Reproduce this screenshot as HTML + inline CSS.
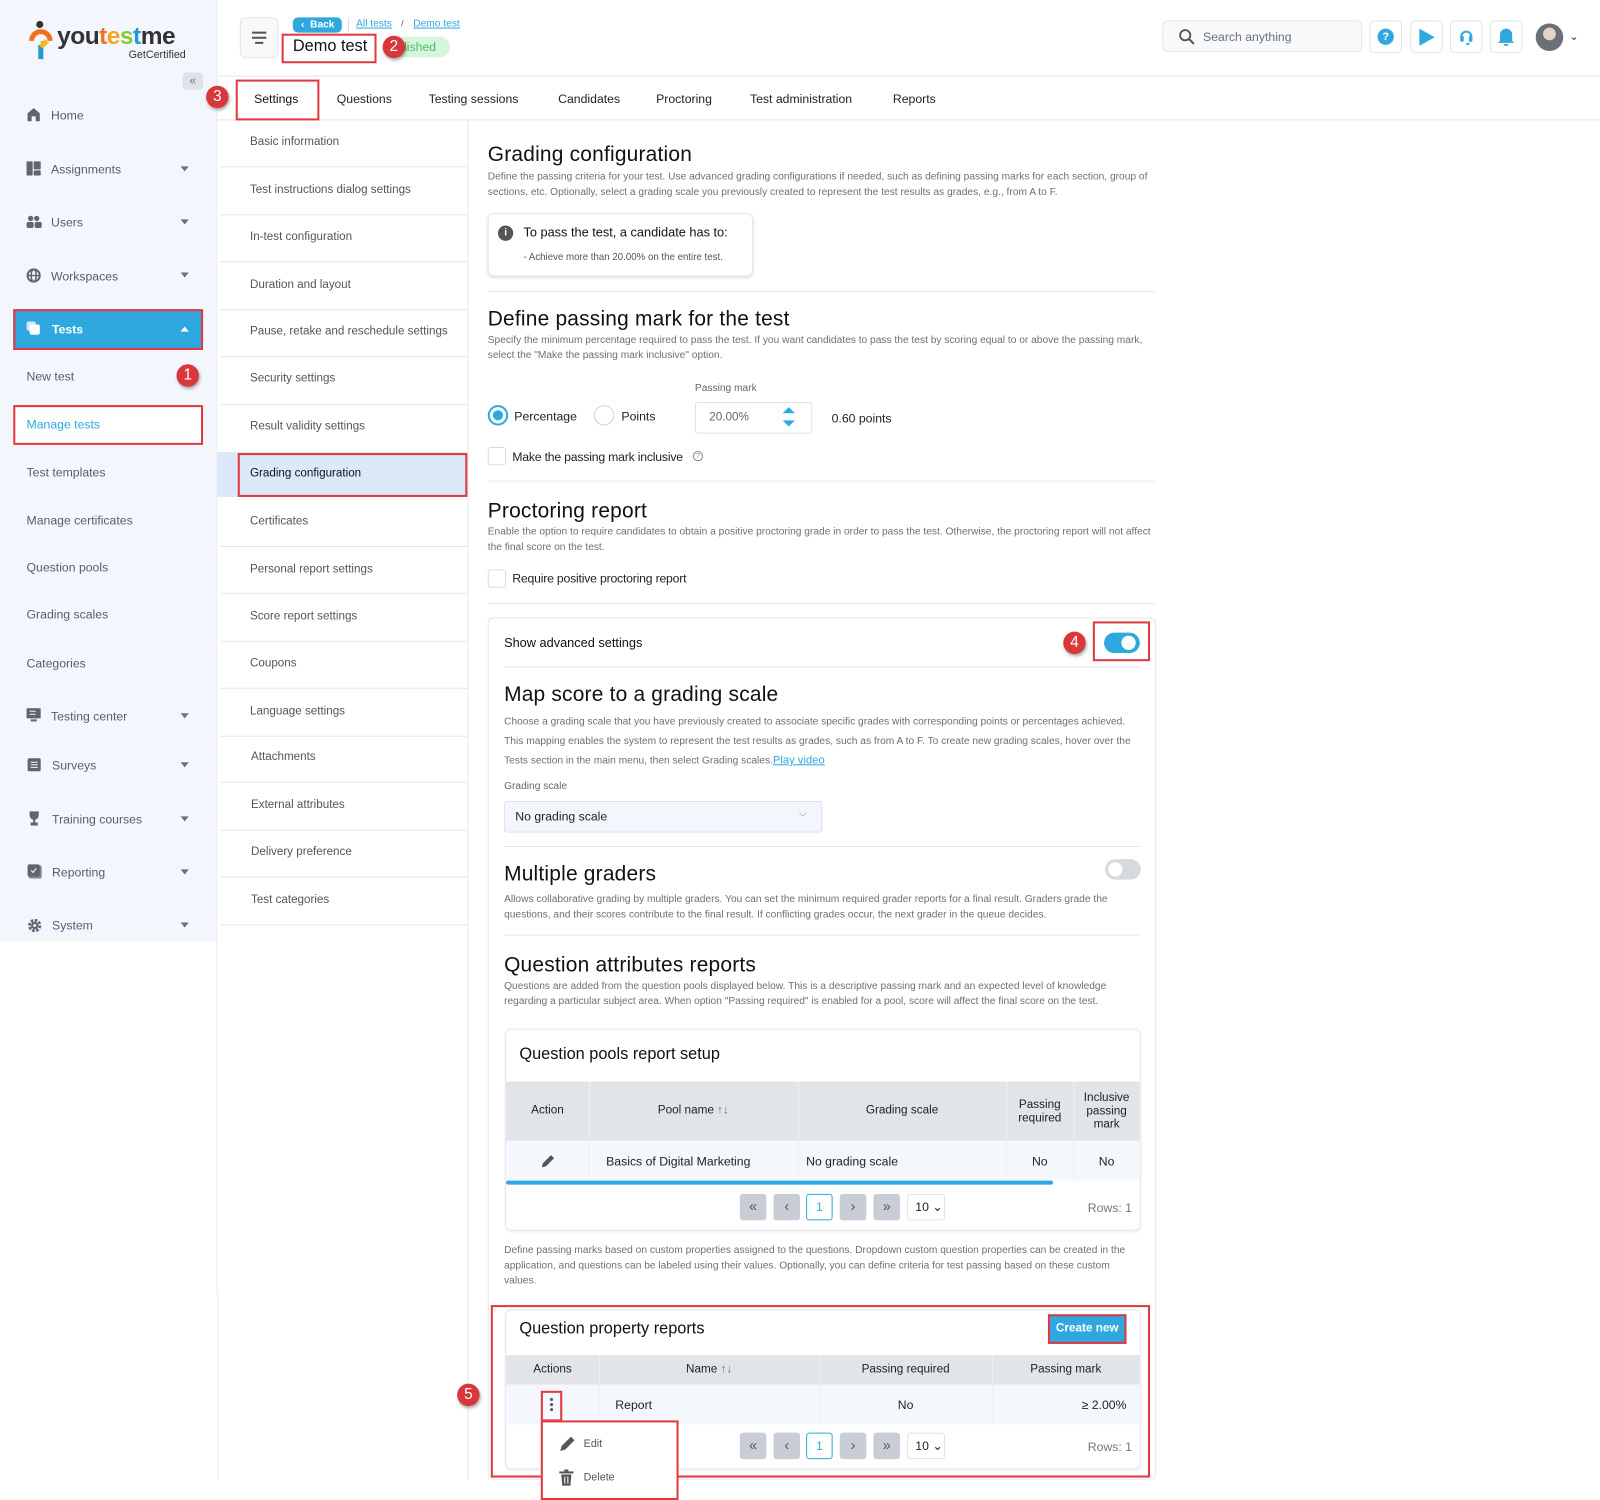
<!DOCTYPE html>
<html><head><meta charset="utf-8"><style>
*{box-sizing:border-box;margin:0;padding:0}
html,body{width:1600px;height:1500px;overflow:hidden;background:#fff}
body{font-family:"Liberation Sans",Arial,sans-serif;color:#222}
#w{position:absolute;left:0;top:0;width:1568px;height:1470px;transform:scale(1.0204);transform-origin:0 0}
.a{position:absolute;white-space:nowrap}
.nav{font-size:12px;color:#555e6b}
.sm{font-size:11.4px;color:#50565f}
.d{font-size:10px;color:#6b7079;line-height:15px;white-space:normal}
.h{font-size:20.5px;color:#111;letter-spacing:.2px}
.hr{position:absolute;height:1px;background:#e3e7ec}
.badge{position:absolute;width:22px;height:22px;border-radius:50%;background:#d8373c;color:#fff;font-size:15px;text-align:center;line-height:22px;box-shadow:1px 2px 3px rgba(0,0,0,.35)}
.red{position:absolute;border:2px solid #e0393e}
.car{position:absolute;width:0;height:0;border-left:4px solid transparent;border-right:4px solid transparent;border-top:5px solid #6b717a}
.pb{position:absolute;width:26px;height:26px;border-radius:3px;background:#c9ced6;color:#555;font-size:14px;text-align:center;line-height:25px}
.th{font-size:11.5px;color:#222;text-align:center}
</style></head><body><div id="w">

<!-- sidebar -->
<div class="a" style="left:0;top:0;width:212px;height:922px;background:#f3f7fd"></div>
<svg class="a" style="left:28px;top:20px" width="24" height="40" viewBox="0 0 24 40"><circle cx="11" cy="4" r="3.5" fill="#333"/><path d="M3 20 a9 9 0 0 1 18 0" stroke="#f37021" stroke-width="5" fill="none"/><path d="M12 20 l6 0 l-6 10z" fill="#8cc63f"/><path d="M12 24 l0 14" stroke="#1e9ad6" stroke-width="5"/><path d="M18 20 l-6 6" stroke="#f8b61b" stroke-width="5"/></svg>
<div class="a" style="left:56px;top:22px;font-size:24px;font-weight:bold;color:#333;letter-spacing:-.5px">you<span style="color:#f37021">t</span><span style="color:#f8a51b">e</span><span style="color:#8cc63f">s</span><span style="color:#1e9ad6">t</span>me</div>
<div class="a" style="left:126px;top:48px;font-size:10.5px;color:#333">GetCertified</div>
<div class="a" style="left:179px;top:71px;width:20px;height:17px;border-radius:4px;background:#dde2e8;color:#777;font-size:12px;text-align:center;line-height:16px">«</div>

<svg class="a" style="left:26px;top:105px" width="14" height="14" viewBox="0 0 14 14"><path d="M1 14V6L7 1l6 5v8H9V9H5v5z" fill="#5d6570"/></svg>
<div class="a nav" style="left:50px;top:106px">Home</div>
<svg class="a" style="left:26px;top:158px" width="14" height="14"><rect x="0" y="0" width="6" height="14" rx="1" fill="#5d6570"/><rect x="7" y="0" width="7" height="8" rx="1" fill="#5d6570"/><rect x="7" y="9" width="7" height="5" rx="1" fill="#5d6570"/></svg>
<div class="a nav" style="left:50px;top:159px">Assignments</div><div class="car" style="left:177px;top:163px"></div>
<svg class="a" style="left:26px;top:211px" width="15" height="13"><circle cx="4" cy="3" r="2.6" fill="#5d6570"/><circle cx="10" cy="3" r="2.6" fill="#5d6570"/><rect x="0" y="6.5" width="7" height="6" rx="2" fill="#5d6570"/><rect x="8" y="6.5" width="7" height="6" rx="2" fill="#5d6570"/></svg>
<div class="a nav" style="left:50px;top:211px">Users</div><div class="car" style="left:177px;top:215px"></div>
<svg class="a" style="left:26px;top:263px" width="14" height="14"><circle cx="7" cy="7" r="6" fill="none" stroke="#5d6570" stroke-width="2"/><ellipse cx="7" cy="7" rx="2.5" ry="6" fill="none" stroke="#5d6570" stroke-width="1.5"/><path d="M1 7h12" stroke="#5d6570" stroke-width="1.5"/></svg>
<div class="a nav" style="left:50px;top:264px">Workspaces</div><div class="car" style="left:177px;top:267px"></div>

<div class="a" style="left:13px;top:303px;width:186px;height:40px;background:#2ea8df"></div>
<div class="red" style="left:13px;top:303px;width:186px;height:40px"></div>
<svg class="a" style="left:26px;top:315px" width="14" height="14"><rect x="0" y="0" width="9" height="9" rx="2" fill="#cdeaf8"/><rect x="3" y="3" width="10" height="10" rx="2" fill="#fff"/></svg>
<div class="a" style="left:51px;top:316px;font-size:12px;font-weight:bold;color:#fff">Tests</div>
<div class="a" style="left:177px;top:320px;width:0;height:0;border-left:4px solid transparent;border-right:4px solid transparent;border-bottom:5px solid #fff"></div>

<div class="a nav" style="left:26px;top:362px">New test</div>
<div class="badge" style="left:173px;top:357px">1</div>
<div class="a" style="left:13px;top:397px;width:186px;height:39px;background:#fff"></div>
<div class="red" style="left:13px;top:397px;width:186px;height:39px"></div>
<div class="a" style="left:26px;top:409px;font-size:12px;color:#2ea8df">Manage tests</div>
<div class="a nav" style="left:26px;top:456px">Test templates</div>
<div class="a nav" style="left:26px;top:503px">Manage certificates</div>
<div class="a nav" style="left:26px;top:549px">Question pools</div>
<div class="a nav" style="left:26px;top:595px">Grading scales</div>
<div class="a nav" style="left:26px;top:643px">Categories</div>
<svg class="a" style="left:26px;top:694px" width="14" height="14"><rect x="0" y="0" width="14" height="10" rx="1" fill="#5d6570"/><rect x="4" y="11" width="6" height="2" fill="#5d6570"/><path d="M3 3h6M3 6h6" stroke="#f3f7fd"/></svg>
<div class="a nav" style="left:50px;top:695px">Testing center</div><div class="car" style="left:177px;top:699px"></div>
<svg class="a" style="left:27px;top:743px" width="13" height="13"><rect width="13" height="13" rx="2" fill="#5d6570"/><path d="M3 4h7M3 6.5h7M3 9h7" stroke="#f3f7fd"/></svg>
<div class="a nav" style="left:51px;top:743px">Surveys</div><div class="car" style="left:177px;top:747px"></div>
<svg class="a" style="left:27px;top:795px" width="13" height="14"><path d="M2 0h9v4a4.5 4.5 0 0 1-9 0z" fill="#5d6570"/><rect x="5.5" y="8" width="2" height="3" fill="#5d6570"/><rect x="3" y="11" width="7" height="3" fill="#5d6570"/></svg>
<div class="a nav" style="left:51px;top:796px">Training courses</div><div class="car" style="left:177px;top:800px"></div>
<svg class="a" style="left:27px;top:847px" width="14" height="14"><rect x="1" y="1" width="13" height="13" rx="2" fill="#888"/><rect width="12" height="12" rx="2" fill="#5d6570"/><path d="M3.5 6l2 2 3-4" stroke="#fff" fill="none"/></svg>
<div class="a nav" style="left:51px;top:848px">Reporting</div><div class="car" style="left:177px;top:852px"></div>
<svg class="a" style="left:27px;top:900px" width="14" height="14" viewBox="0 0 14 14"><circle cx="7" cy="7" r="5" fill="none" stroke="#5d6570" stroke-width="3" stroke-dasharray="2.5 1.4"/><circle cx="7" cy="7" r="3.5" fill="#5d6570"/><circle cx="7" cy="7" r="1.5" fill="#f3f7fd"/></svg>
<div class="a nav" style="left:51px;top:900px">System</div><div class="car" style="left:177px;top:904px"></div>

<!-- header -->
<div class="a" style="left:235px;top:17px;width:38px;height:40px;border:1px solid #e1e5ea;border-radius:6px;background:#f8f9fb"></div>
<div class="a" style="left:247px;top:31px;width:14px;height:1.5px;background:#555"></div>
<div class="a" style="left:247px;top:36px;width:14px;height:1.5px;background:#555"></div>
<div class="a" style="left:250px;top:41px;width:8px;height:1.5px;background:#555"></div>
<div class="a" style="left:287px;top:17px;width:48px;height:15px;border-radius:5px;background:#2ea8df;color:#fff;font-size:10px;font-weight:bold;line-height:15px;padding-left:8px">‹&nbsp; Back</div>
<div class="a" style="left:341px;top:17px;width:1px;height:15px;background:#ddd"></div>
<div class="a" style="left:349px;top:18px;font-size:10px;color:#2ea8df;text-decoration:underline">All tests</div>
<div class="a" style="left:393px;top:18px;font-size:9px;color:#555">/</div>
<div class="a" style="left:405px;top:18px;font-size:10px;color:#2ea8df;text-decoration:underline">Demo test</div>
<div class="a" style="left:376px;top:36px;width:65px;height:20px;border-radius:10px;background:#d5f5dc;color:#47c062;font-size:12px;line-height:20px;padding-left:20px">lished</div>
<div class="a" style="left:287px;top:37px;font-size:16px;color:#111">Demo test</div>
<div class="red" style="left:276px;top:33px;width:93px;height:29px"></div>
<div class="badge" style="left:375px;top:35px">2</div>

<div class="a" style="left:1139px;top:20px;width:196px;height:31px;border:1px solid #e4e7eb;border-radius:5px;background:#f8f9fb"></div>
<svg class="a" style="left:1155px;top:28px" width="16" height="16"><circle cx="6.5" cy="6.5" r="5" fill="none" stroke="#555" stroke-width="1.8"/><path d="M10 10l5 5" stroke="#555" stroke-width="2"/></svg>
<div class="a" style="left:1179px;top:29px;font-size:12px;color:#6c727a">Search anything</div>
<div class="a" style="left:1342px;top:20px;width:32px;height:32px;border:1px solid #e1e5ea;border-radius:5px"></div>
<div class="a" style="left:1350px;top:28px;width:16px;height:16px;border-radius:50%;background:#2ea8df;color:#fff;font-size:11px;font-weight:bold;text-align:center;line-height:16px">?</div>
<div class="a" style="left:1382px;top:20px;width:32px;height:32px;border:1px solid #e1e5ea;border-radius:5px"></div>
<svg class="a" style="left:1390px;top:28px" width="17" height="17"><path d="M1 0L16 8.5L1 17z" fill="#2ea8df"/></svg>
<div class="a" style="left:1421px;top:20px;width:32px;height:32px;border:1px solid #e1e5ea;border-radius:5px"></div>
<svg class="a" style="left:1429px;top:27px" width="16" height="18"><path d="M3 9a5 5 0 0 1 10 0" stroke="#2ea8df" stroke-width="2" fill="none"/><rect x="2" y="8" width="3.5" height="6" rx="1.5" fill="#2ea8df"/><rect x="10.5" y="8" width="3.5" height="6" rx="1.5" fill="#2ea8df"/><path d="M8 16h3" stroke="#2ea8df" stroke-width="2"/></svg>
<div class="a" style="left:1460px;top:20px;width:32px;height:32px;border:1px solid #e1e5ea;border-radius:5px"></div>
<svg class="a" style="left:1467px;top:26px" width="18" height="20"><path d="M3 14V8a6 6 0 0 1 12 0v6l2 2H1z" fill="#2ea8df"/><rect x="7" y="17" width="4" height="2" rx="1" fill="#2ea8df"/></svg>
<div class="a" style="left:1505px;top:23px;width:27px;height:27px;border-radius:50%;background:radial-gradient(circle at 50% 38%,#e8d3c4 0 28%,#6a6f78 30% 100%)"></div>
<div class="a" style="left:1538px;top:29px;font-size:11px;color:#333">⌄</div>

<div class="hr" style="left:213px;top:74px;width:1355px"></div>
<div class="hr" style="left:213px;top:117px;width:1355px"></div>
<div class="a" style="left:212px;top:0;width:1px;height:1265px;background:#e8ecf0"></div>
<div class="a" style="left:213px;top:1265px;width:1px;height:185px;background:#e8ecf0"></div>

<!-- tabs -->
<div class="a" style="left:249px;top:90px;font-size:12px;color:#111">Settings</div>
<div class="red" style="left:231px;top:78px;width:82px;height:40px"></div>
<div class="badge" style="left:202px;top:84px">3</div>
<div class="a" style="left:330px;top:90px;font-size:12px;color:#222">Questions</div>
<div class="a" style="left:420px;top:90px;font-size:12px;color:#222">Testing sessions</div>
<div class="a" style="left:547px;top:90px;font-size:12px;color:#222">Candidates</div>
<div class="a" style="left:643px;top:90px;font-size:12px;color:#222">Proctoring</div>
<div class="a" style="left:735px;top:90px;font-size:12px;color:#222">Test administration</div>
<div class="a" style="left:875px;top:90px;font-size:12px;color:#222">Reports</div>

<!-- settings menu -->
<div class="a" style="left:458px;top:117px;width:1px;height:1333px;background:#e3e7ec"></div>
<div class="a" style="left:213px;top:443px;width:245px;height:44px;background:#dce9fb"></div>
<div class="red" style="left:233px;top:444px;width:225px;height:43px"></div>
<div class="a sm" style="left:245px;top:133px">Basic information</div><div class="hr" style="left:216px;top:163px;width:242px"></div>
<div class="a sm" style="left:245px;top:180px">Test instructions dialog settings</div><div class="hr" style="left:216px;top:210px;width:242px"></div>
<div class="a sm" style="left:245px;top:226px">In-test configuration</div><div class="hr" style="left:216px;top:256px;width:242px"></div>
<div class="a sm" style="left:245px;top:273px">Duration and layout</div><div class="hr" style="left:216px;top:303px;width:242px"></div>
<div class="a sm" style="left:245px;top:319px">Pause, retake and reschedule settings</div><div class="hr" style="left:216px;top:349px;width:242px"></div>
<div class="a sm" style="left:245px;top:365px">Security settings</div><div class="hr" style="left:216px;top:396px;width:242px"></div>
<div class="a sm" style="left:245px;top:412px">Result validity settings</div>
<div class="a" style="left:245px;top:458px;font-size:11.4px;color:#111">Grading configuration</div>
<div class="a sm" style="left:245px;top:505px">Certificates</div><div class="hr" style="left:216px;top:535px;width:242px"></div>
<div class="a sm" style="left:245px;top:552px">Personal report settings</div><div class="hr" style="left:216px;top:581px;width:242px"></div>
<div class="a sm" style="left:245px;top:598px">Score report settings</div><div class="hr" style="left:216px;top:628px;width:242px"></div>
<div class="a sm" style="left:245px;top:644px">Coupons</div><div class="hr" style="left:216px;top:674px;width:242px"></div>
<div class="a sm" style="left:245px;top:691px">Language settings</div><div class="hr" style="left:216px;top:721px;width:242px"></div>
<div class="a sm" style="left:246px;top:736px">Attachments</div><div class="hr" style="left:216px;top:766px;width:242px"></div>
<div class="a sm" style="left:246px;top:783px">External attributes</div><div class="hr" style="left:216px;top:813px;width:242px"></div>
<div class="a sm" style="left:246px;top:829px">Delivery preference</div><div class="hr" style="left:216px;top:859px;width:242px"></div>
<div class="a sm" style="left:246px;top:876px">Test categories</div><div class="hr" style="left:216px;top:906px;width:242px"></div>

<!-- main -->
<div class="a h" style="left:478px;top:140px">Grading configuration</div>
<div class="a d" style="left:478px;top:166px;width:655px">Define the passing criteria for your test. Use advanced grading configurations if needed, such as defining passing marks for each section, group of sections, etc. Optionally, select a grading scale you previously created to represent the test results as grades, e.g., from A to F.</div>
<div class="a" style="left:478px;top:209px;width:260px;height:62px;border:1px solid #e3e6ea;border-radius:6px;box-shadow:0 1px 3px rgba(0,0,0,.12)"></div>
<div class="a" style="left:488px;top:221px;width:15px;height:15px;border-radius:50%;background:#555;color:#fff;font-size:10px;font-weight:bold;text-align:center;line-height:15px">i</div>
<div class="a" style="left:513px;top:221px;font-size:12.5px;color:#111">To pass the test, a candidate has to:</div>
<div class="a" style="left:513px;top:247px;font-size:9.5px;color:#555">- Achieve more than 20.00% on the entire test.</div>
<div class="hr" style="left:478px;top:285px;width:654px"></div>

<div class="a h" style="left:478px;top:301px">Define passing mark for the test</div>
<div class="a d" style="left:478px;top:326px;width:655px">Specify the minimum percentage required to pass the test. If you want candidates to pass the test by scoring equal to or above the passing mark, select the "Make the passing mark inclusive" option.</div>
<div class="a" style="left:681px;top:375px;font-size:10px;color:#666">Passing mark</div>
<div class="a" style="left:478px;top:397px;width:20px;height:20px;border-radius:50%;border:2px solid #2ea8df"></div>
<div class="a" style="left:483px;top:402px;width:10px;height:10px;border-radius:50%;background:#2ea8df"></div>
<div class="a" style="left:504px;top:401px;font-size:12px;color:#222">Percentage</div>
<div class="a" style="left:582px;top:397px;width:20px;height:20px;border-radius:50%;border:1px solid #d0d4da"></div>
<div class="a" style="left:609px;top:401px;font-size:12px;color:#222">Points</div>
<div class="a" style="left:681px;top:394px;width:115px;height:31px;border:1px solid #dde1e6;border-radius:3px"></div>
<div class="a" style="left:695px;top:403px;font-size:11.5px;color:#666">20.00%</div>
<div class="a" style="left:767px;top:399px;width:0;height:0;border-left:6px solid transparent;border-right:6px solid transparent;border-bottom:6px solid #2ea8df"></div>
<div class="a" style="left:767px;top:412px;width:0;height:0;border-left:6px solid transparent;border-right:6px solid transparent;border-top:6px solid #2ea8df"></div>
<div class="a" style="left:815px;top:403px;font-size:12px;color:#222">0.60 points</div>
<div class="a" style="left:478px;top:438px;width:18px;height:18px;border:1px solid #d7dbe0;border-radius:3px"></div>
<div class="a" style="left:502px;top:441px;font-size:12px;color:#222;letter-spacing:-.2px">Make the passing mark inclusive</div>
<div class="a" style="left:679px;top:442px;width:10px;height:10px;border-radius:50%;border:1px solid #888;font-size:7px;color:#888;text-align:center;line-height:9px">?</div>
<div class="hr" style="left:478px;top:471px;width:654px"></div>

<div class="a h" style="left:478px;top:489px">Proctoring report</div>
<div class="a d" style="left:478px;top:514px;width:655px">Enable the option to require candidates to obtain a positive proctoring grade in order to pass the test. Otherwise, the proctoring report will not affect the final score on the test.</div>
<div class="a" style="left:478px;top:558px;width:18px;height:18px;border:1px solid #d7dbe0;border-radius:3px"></div>
<div class="a" style="left:502px;top:560px;font-size:12px;color:#222;letter-spacing:-.2px">Require positive proctoring report</div>
<div class="hr" style="left:478px;top:591px;width:654px"></div>

<!-- advanced card -->
<div class="a" style="left:478px;top:605px;width:655px;height:845px;border:1px solid #e3e7ec;border-radius:6px"></div>
<div class="a" style="left:494px;top:623px;font-size:12.5px;color:#111">Show advanced settings</div>
<div class="a" style="left:1082px;top:620px;width:35px;height:20px;border-radius:10px;background:#2ea8df"></div>
<div class="a" style="left:1099px;top:623px;width:14px;height:14px;border-radius:50%;background:#fff"></div>
<div class="red" style="left:1071px;top:609px;width:56px;height:39px"></div>
<div class="badge" style="left:1042px;top:619px">4</div>
<div class="hr" style="left:494px;top:653px;width:623px"></div>

<div class="a h" style="left:494px;top:669px">Map score to a grading scale</div>
<div class="a d" style="left:494px;top:699px;width:625px;line-height:18.5px">Choose a grading scale that you have previously created to associate specific grades with corresponding points or percentages achieved. This mapping enables the system to represent the test results as grades, such as from A to F. To create new grading scales, hover over the Tests section in the main menu, then select Grading scales.<span style="color:#2ea8df;text-decoration:underline;font-size:11px">Play video</span></div>
<div class="a" style="left:494px;top:765px;font-size:10px;color:#666">Grading scale</div>
<div class="a" style="left:494px;top:785px;width:312px;height:31px;border:1px solid #dde1e6;border-radius:3px;background:#f3f7fd"></div>
<div class="a" style="left:505px;top:793px;font-size:12px;color:#222">No grading scale</div>
<div class="a" style="left:783px;top:792px;font-size:10px;color:#888">⌵</div>
<div class="hr" style="left:494px;top:829px;width:623px"></div>

<div class="a h" style="left:494px;top:845px">Multiple graders</div>
<div class="a" style="left:1083px;top:842px;width:35px;height:20px;border-radius:10px;background:#d6d9de"></div>
<div class="a" style="left:1086px;top:845px;width:14px;height:14px;border-radius:50%;background:#fff"></div>
<div class="a d" style="left:494px;top:874px;width:625px">Allows collaborative grading by multiple graders. You can set the minimum required grader reports for a final result. Graders grade the questions, and their scores contribute to the final result. If conflicting grades occur, the next grader in the queue decides.</div>
<div class="hr" style="left:494px;top:916px;width:623px"></div>

<div class="a h" style="left:494px;top:934px">Question attributes reports</div>
<div class="a d" style="left:494px;top:959px;width:625px">Questions are added from the question pools displayed below. This is a descriptive passing mark and an expected level of knowledge regarding a particular subject area. When option "Passing required" is enabled for a pool, score will affect the final score on the test.</div>

<!-- pools card -->
<div class="a" style="left:495px;top:1008px;width:623px;height:198px;border:1px solid #e3e7ec;border-radius:6px;box-shadow:0 1px 2px rgba(0,0,0,.08)"></div>
<div class="a" style="left:509px;top:1025px;font-size:16px;color:#111">Question pools report setup</div>
<div class="a" style="left:496px;top:1060px;width:621px;height:58px;background:#e1e4e8"></div>
<div class="a" style="left:496px;top:1118px;width:621px;height:39px;background:#f4f7fc"></div>
<div class="a" style="left:577px;top:1060px;width:1px;height:97px;background:#eef0f3"></div>
<div class="a" style="left:782px;top:1060px;width:1px;height:97px;background:#eef0f3"></div>
<div class="a" style="left:986px;top:1060px;width:1px;height:97px;background:#eef0f3"></div>
<div class="a" style="left:1052px;top:1060px;width:1px;height:97px;background:#eef0f3"></div>
<div class="a th" style="left:496px;top:1082px;width:81px">Action</div>
<div class="a th" style="left:577px;top:1082px;width:205px">Pool name <span style="color:#777">↑↓</span></div>
<div class="a th" style="left:782px;top:1082px;width:204px">Grading scale</div>
<div class="a th" style="left:986px;top:1077px;width:66px;white-space:normal;line-height:13px">Passing required</div>
<div class="a th" style="left:1052px;top:1070px;width:65px;white-space:normal;line-height:13px">Inclusive passing mark</div>
<svg class="a" style="left:529px;top:1130px" width="16" height="16"><path d="M2 14l1-4 8-8 3 3-8 8z" fill="#555"/></svg>
<div class="a" style="left:594px;top:1131px;font-size:12px;color:#222">Basics of Digital Marketing</div>
<div class="a" style="left:790px;top:1131px;font-size:12px;color:#222">No grading scale</div>
<div class="a th" style="left:986px;top:1131px;width:66px;font-size:12px">No</div>
<div class="a th" style="left:1052px;top:1131px;width:65px;font-size:12px">No</div>
<div class="a" style="left:496px;top:1157px;width:536px;height:4px;border-radius:2px;background:#2ea8df"></div>
<div class="pb" style="left:725px;top:1170px">«</div>
<div class="pb" style="left:758px;top:1170px">‹</div>
<div class="pb" style="left:790px;top:1170px;background:#fff;border:1px solid #2ea8df;color:#2ea8df;font-size:12px">1</div>
<div class="pb" style="left:823px;top:1170px">›</div>
<div class="pb" style="left:856px;top:1170px">»</div>
<div class="a" style="left:889px;top:1170px;width:37px;height:26px;border:1px solid #dde1e6;border-radius:3px;font-size:12px;line-height:25px;padding-left:7px">10 ⌄</div>
<div class="a" style="left:1066px;top:1177px;font-size:12px;color:#777">Rows: 1</div>

<div class="a d" style="left:494px;top:1218px;width:625px">Define passing marks based on custom properties assigned to the questions. Dropdown custom question properties can be created in the application, and questions can be labeled using their values. Optionally, you can define criteria for test passing based on these custom values.</div>

<!-- property reports -->
<div class="a" style="left:495px;top:1283px;width:623px;height:157px;border:1px solid #e3e7ec;border-radius:6px;box-shadow:0 1px 2px rgba(0,0,0,.08)"></div>
<div class="red" style="left:481px;top:1279px;width:646px;height:169px"></div>
<div class="a" style="left:509px;top:1294px;font-size:16px;color:#111">Question property reports</div>
<div class="a" style="left:1027px;top:1288px;width:77px;height:29px;background:#2ea8df;border:2px solid #e0393e;color:#fff;font-size:11.5px;font-weight:bold;text-align:center;line-height:25px">Create new</div>
<div class="a" style="left:496px;top:1328px;width:621px;height:29px;background:#e1e4e8"></div>
<div class="a" style="left:496px;top:1357px;width:621px;height:39px;background:#f4f7fc"></div>
<div class="a" style="left:587px;top:1328px;width:1px;height:68px;background:#eef0f3"></div>
<div class="a" style="left:803px;top:1328px;width:1px;height:68px;background:#eef0f3"></div>
<div class="a" style="left:972px;top:1328px;width:1px;height:68px;background:#eef0f3"></div>
<div class="a th" style="left:496px;top:1336px;width:91px">Actions</div>
<div class="a th" style="left:587px;top:1336px;width:216px">Name <span style="color:#777">↑↓</span></div>
<div class="a th" style="left:803px;top:1336px;width:169px">Passing required</div>
<div class="a th" style="left:972px;top:1336px;width:145px">Passing mark</div>
<div class="a" style="left:539px;top:1370px;width:3px;height:3px;border-radius:50%;background:#555;box-shadow:0 5px 0 #555,0 10px 0 #555"></div>
<div class="red" style="left:530px;top:1363px;width:21px;height:30px"></div>
<div class="a" style="left:603px;top:1370px;font-size:12px;color:#222">Report</div>
<div class="a th" style="left:803px;top:1370px;width:169px;font-size:12px">No</div>
<div class="a" style="left:1060px;top:1370px;font-size:12px;color:#222">≥ 2.00%</div>
<div class="pb" style="left:725px;top:1404px">«</div>
<div class="pb" style="left:758px;top:1404px">‹</div>
<div class="pb" style="left:790px;top:1404px;background:#fff;border:1px solid #2ea8df;color:#2ea8df;font-size:12px">1</div>
<div class="pb" style="left:823px;top:1404px">›</div>
<div class="pb" style="left:856px;top:1404px">»</div>
<div class="a" style="left:889px;top:1404px;width:37px;height:26px;border:1px solid #dde1e6;border-radius:3px;font-size:12px;line-height:25px;padding-left:7px">10 ⌄</div>
<div class="a" style="left:1066px;top:1411px;font-size:12px;color:#777">Rows: 1</div>

<div class="a" style="left:530px;top:1392px;width:135px;height:78px;background:#fff;border:2px solid #e0393e"></div>
<svg class="a" style="left:547px;top:1406px" width="18" height="18"><path d="M2 16l1.5-5 9-9 3.5 3.5-9 9z" fill="#555"/></svg>
<div class="a" style="left:572px;top:1409px;font-size:10.5px;color:#555">Edit</div>
<svg class="a" style="left:548px;top:1440px" width="14" height="16"><rect x="0" y="2" width="14" height="2" fill="#555"/><rect x="5" y="0" width="4" height="2" fill="#555"/><path d="M2 5h10l-1 11H3z" fill="#555"/><path d="M5.5 7v7M8.5 7v7" stroke="#fff"/></svg>
<div class="a" style="left:572px;top:1442px;font-size:10.5px;color:#555">Delete</div>
<div class="badge" style="left:448px;top:1356px">5</div>

</div></body></html>
